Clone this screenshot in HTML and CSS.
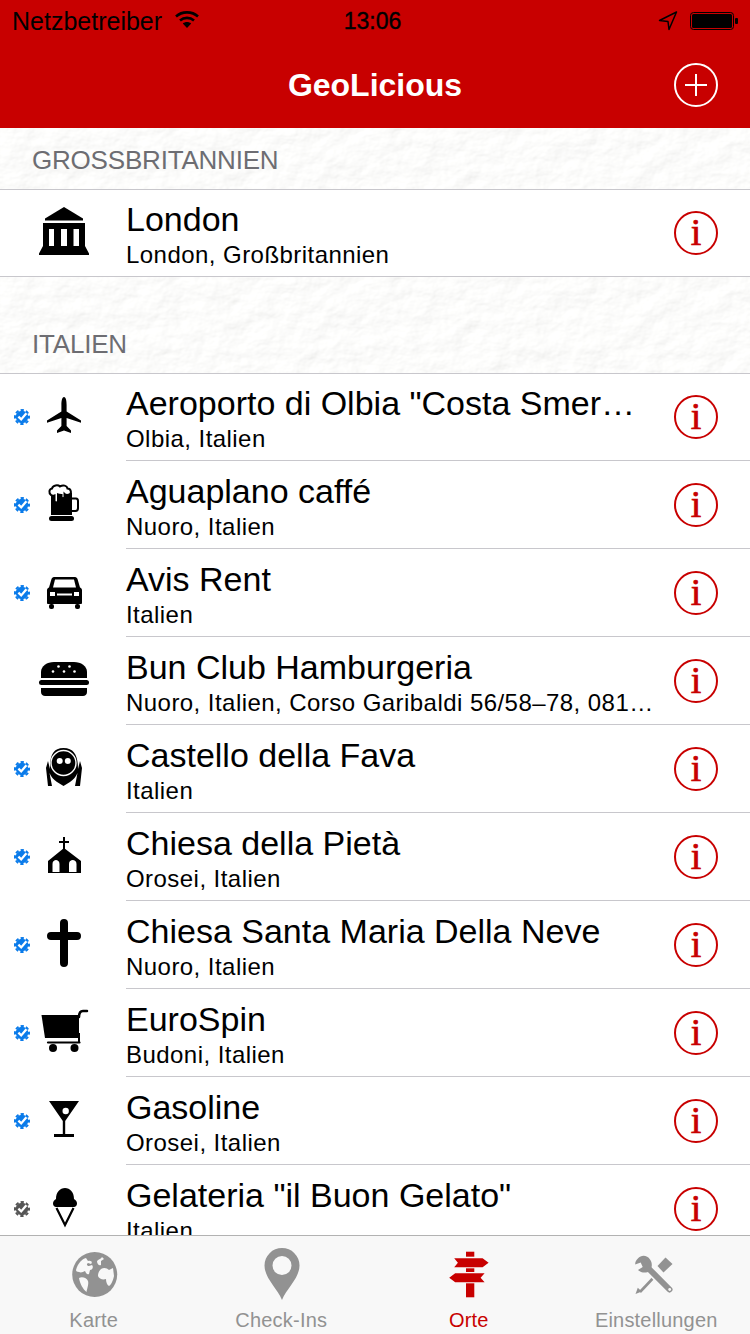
FILE: index.html
```html
<!DOCTYPE html>
<html lang="de">
<head>
    <meta charset="UTF-8">
    <meta name="viewport" content="width=device-width, initial-scale=1.0">
    <title>GeoLicious</title>
    <link rel="stylesheet" href="styles.css">
</head>
<body>
    <svg class="defs" width="0" height="0">
        <defs>
            <filter id="leather" x="0" y="0" width="100%" height="100%">
                <feTurbulence type="fractalNoise" baseFrequency="0.035 0.05" numOctaves="4" seed="11" result="n"/>
                <feDiffuseLighting in="n" lighting-color="#ffffff" surfaceScale="2.400" diffuseConstant="1.05">
                    <feDistantLight azimuth="45" elevation="62"/>
                </feDiffuseLighting>
                <feComponentTransfer>
                    <feFuncR type="linear" slope="0.45" intercept="0.56"/>
                    <feFuncG type="linear" slope="0.45" intercept="0.56"/>
                    <feFuncB type="linear" slope="0.45" intercept="0.55"/>
                </feComponentTransfer>
            </filter>
            <symbol id="badge" viewBox="0 0 16 16">
                <circle cx="8" cy="8" r="6.2" fill="currentColor"/>
                <circle cx="8" cy="8" r="7" fill="none" stroke="currentColor" stroke-width="2" stroke-dasharray="3.3 2.2" stroke-dashoffset="1.650"/>
                <path d="M4.400 7.600L7.200 10.400L12.400 4.200" fill="none" stroke="#fff" stroke-width="2.300"/>
            </symbol>
        </defs>
    </svg>

    <header class="top">
        <div class="status">
            <div class="status-left">
                <span>Netzbetreiber</span>
                <svg class="wifi" width="26" height="18" viewBox="0 0 26 18">
                    <path d="M2 6.500C8 1 18 1 24 6.500" fill="none" stroke="#000" stroke-width="2.600"/>
                    <path d="M6 10.500C10 7 16 7 20 10.500" fill="none" stroke="#000" stroke-width="2.600"/>
                    <path d="M13 18L8.800 13.600C11 11.600 15 11.600 17.200 13.600Z"/>
                </svg>
            </div>
            <div class="status-time">13:06</div>
            <div class="status-right">
                <svg width="20" height="20" viewBox="0 0 20 20">
                    <path d="M18.500 1L1.500 9.500L10 10.500L11 18.500Z" fill="none" stroke="#000" stroke-width="1.500" stroke-linejoin="round"/>
                </svg>
                <svg width="48" height="18" viewBox="0 0 48 18">
                    <rect x="0.500" y="0.500" width="43" height="17" rx="3" fill="none" stroke="#000"/>
                    <rect x="2" y="2" width="40" height="14" rx="1.500"/>
                    <rect x="45" y="6" width="3" height="6" rx="1"/>
                </svg>
            </div>
        </div>
        <div class="nav">
            <span></span>
            <div class="nav-title">GeoLicious</div>
            <svg class="nav-add" width="44" height="44" viewBox="0 0 44 44">
                <circle cx="22" cy="22" r="21" fill="none" stroke="#fff" stroke-width="2"/>
                <path d="M22 11V33M11 22H33" stroke="#fff" stroke-width="2"/>
            </svg>
        </div>
    </header>

    <main class="list">
        <section class="group group-single">
            <div class="band band-first">
                <svg class="texture"><rect width="100%" height="100%" filter="url(#leather)"/></svg>
                <h2>GROSSBRITANNIEN</h2>
            </div>
            <div class="row">
                <span class="mark"></span>
                <svg class="place" viewBox="0 0 68 60">
                    <path d="M34 4L53 15.500V17.500H15V15.500Z"/>
                    <path fill-rule="evenodd" d="M13 20H55V43L59 50.500V52H9V50.500L13 43ZM19 26V43H24V26ZM31 26V43H37V26ZM43.500 26V43H49V26Z"/>
                </svg>
                <div class="row-body">
                    <div class="row-text">
                        <div class="name">London</div>
                        <div class="sub">London, Großbritannien</div>
                    </div>
                    <div class="info">i</div>
                </div>
            </div>
        </section>

        <section class="group">
            <div class="band band-tall">
                <svg class="texture"><rect width="100%" height="100%" filter="url(#leather)"/></svg>
                <h2>ITALIEN</h2>
            </div>

            <div class="row">
                <svg class="mark"><use href="#badge"/></svg>
                <svg class="place" viewBox="0 0 68 60">
                    <path d="M34 10C36 10 36.600 14 36.600 18V24.500L51 33.500V35.800L36.600 31V39L41 43.600V46L34 43.600L27 46V43.600L31.400 39V31L17 35.800V33.500L31.400 24.500V18C31.400 14 32 10 34 10Z"/>
                </svg>
                <div class="row-body">
                    <div class="row-text">
                        <div class="name">Aeroporto di Olbia "Costa Smer…</div>
                        <div class="sub">Olbia, Italien</div>
                    </div>
                    <div class="info">i</div>
                </div>
            </div>

            <div class="row">
                <svg class="mark"><use href="#badge"/></svg>
                <svg class="place" viewBox="0 0 68 60">
                    <path d="M21 18H42V40H21Z"/>
                    <path d="M42 23.500H46C47.500 23.500 48 24.500 48 26V33C48 35 47 36 45.500 36H42" fill="none" stroke="#000" stroke-width="2"/>
                    <rect x="19" y="41" width="25" height="5" rx="2.500"/>
                    <path d="M21 20C18.500 18 19 14 22 13.500C23 10 28 9.500 30 11.500C33 9.500 37 10.500 37.500 13.500C41 13.500 42 18 39.500 19.500C37 20.500 35 19.500 34.500 19V22C34 23.500 32 23.500 31.500 22V20C29.500 20 29 20 28 19.500V26C27.500 28 25 28 24.500 26V20.500C23 21 22 21 21 20Z" fill="#fff" stroke="#000" stroke-width="2"/>
                </svg>
                <div class="row-body">
                    <div class="row-text">
                        <div class="name">Aguaplano caffé</div>
                        <div class="sub">Nuoro, Italien</div>
                    </div>
                    <div class="info">i</div>
                </div>
            </div>

            <div class="row">
                <svg class="mark"><use href="#badge"/></svg>
                <svg class="place" viewBox="0 0 68 60">
                    <path fill-rule="evenodd" d="M24 14H45C46.500 14 47 15 47.500 16L50 24.500C51.500 25 52 26 52 27.500V40C52 40.500 51.500 41 51 41H18C17.500 41 17 40.500 17 40V27.500C17 26 17.500 25 19 24.500L21.500 16C22 15 22.500 14 24 14ZM25 16.500L23 24.500H46L44 16.500ZM20 29V33H25V29ZM44 29V33H49V29ZM27 30.500V32.500H42V30.500Z"/>
                    <rect x="19" y="41" width="5" height="5" rx="2"/>
                    <rect x="45" y="41" width="5" height="5" rx="2"/>
                </svg>
                <div class="row-body">
                    <div class="row-text">
                        <div class="name">Avis Rent</div>
                        <div class="sub">Italien</div>
                    </div>
                    <div class="info">i</div>
                </div>
            </div>

            <div class="row">
                <span class="mark"></span>
                <svg class="place" viewBox="0 0 68 60">
                    <path d="M11 27V21C11 15 17 11 24 11H44C51 11 57 15 57 21V27Z"/>
                    <rect x="9" y="29" width="50" height="5" rx="2.500"/>
                    <path d="M11 37H57V41C57 43.500 55 45 53 45H15C13 45 11 43.500 11 41Z"/>
                    <g fill="#fff">
                        <circle cx="28.500" cy="15.500" r="1.300"/>
                        <circle cx="39.500" cy="15.500" r="1.300"/>
                        <circle cx="23" cy="20.500" r="1.300"/>
                        <circle cx="34" cy="20.500" r="1.300"/>
                        <circle cx="44.500" cy="20.500" r="1.300"/>
                    </g>
                </svg>
                <div class="row-body">
                    <div class="row-text">
                        <div class="name">Bun Club Hamburgeria</div>
                        <div class="sub">Nuoro, Italien, Corso Garibaldi 56/58–78, 081…</div>
                    </div>
                    <div class="info">i</div>
                </div>
            </div>

            <div class="row">
                <svg class="mark"><use href="#badge"/></svg>
                <svg class="place" viewBox="0 0 68 60">
                    <path d="M18 22L16 29L18 47H22L19.500 34C21 38 24 41 27 43L33.500 47L40 43C43 41 46 38 47.500 34L45 47H50L52 29L50 22L48 30C48 18 45 9 33.500 9C22 9 20 18 20 30Z"/>
                    <circle cx="33.500" cy="24" r="12.500" fill="none" stroke="#fff" stroke-width="1.400"/>
                    <circle cx="29.700" cy="22" r="3" fill="#fff"/>
                    <circle cx="37.800" cy="22" r="3" fill="#fff"/>
                </svg>
                <div class="row-body">
                    <div class="row-text">
                        <div class="name">Castello della Fava</div>
                        <div class="sub">Italien</div>
                    </div>
                    <div class="info">i</div>
                </div>
            </div>

            <div class="row">
                <svg class="mark"><use href="#badge"/></svg>
                <svg class="place" viewBox="0 0 68 60">
                    <path d="M33 10H35V14H39V16H35V22H33V16H29V14H33Z"/>
                    <path fill-rule="evenodd" d="M34 21L51 34V46H18V34ZM22.500 45H29.500V37C29.500 34 27.500 33 26 33C24.500 33 22.500 34 22.500 37ZM39 45H46.500V37C46.500 34 44.500 33 42.700 33C41 33 39 34 39 37Z"/>
                </svg>
                <div class="row-body">
                    <div class="row-text">
                        <div class="name">Chiesa della Pietà</div>
                        <div class="sub">Orosei, Italien</div>
                    </div>
                    <div class="info">i</div>
                </div>
            </div>

            <div class="row">
                <svg class="mark"><use href="#badge"/></svg>
                <svg class="place" viewBox="0 0 68 60">
                    <path d="M34 8V48M21 21H47" fill="none" stroke="#000" stroke-width="8" stroke-linecap="round"/>
                </svg>
                <div class="row-body">
                    <div class="row-text">
                        <div class="name">Chiesa Santa Maria Della Neve</div>
                        <div class="sub">Nuoro, Italien</div>
                    </div>
                    <div class="info">i</div>
                </div>
            </div>

            <div class="row">
                <svg class="mark"><use href="#badge"/></svg>
                <svg class="place" viewBox="0 0 68 60">
                    <path d="M11.500 12H49V35H15Z"/>
                    <path d="M49 14C49 10 50 8 53 8H57" fill="none" stroke="#000" stroke-width="2.500" stroke-linecap="round"/>
                    <path d="M18 39.500H49.500" stroke="#000" stroke-width="2.200" stroke-linecap="round"/>
                    <path d="M49 30V39" stroke="#000" stroke-width="2"/>
                    <circle cx="23" cy="45" r="4"/>
                    <circle cx="44.500" cy="45" r="4"/>
                </svg>
                <div class="row-body">
                    <div class="row-text">
                        <div class="name">EuroSpin</div>
                        <div class="sub">Budoni, Italien</div>
                    </div>
                    <div class="info">i</div>
                </div>
            </div>

            <div class="row">
                <svg class="mark"><use href="#badge"/></svg>
                <svg class="place" viewBox="0 0 68 60">
                    <path d="M19 10H49L35.200 30V43H44V46H24V43H32.800V30Z"/>
                    <circle cx="35.700" cy="20" r="3.200" fill="#fff"/>
                </svg>
                <div class="row-body">
                    <div class="row-text">
                        <div class="name">Gasoline</div>
                        <div class="sub">Orosei, Italien</div>
                    </div>
                    <div class="info">i</div>
                </div>
            </div>

            <div class="row">
                <svg class="mark mark-grey"><use href="#badge"/></svg>
                <svg class="place" viewBox="0 0 68 60">
                    <path d="M26 20C26 13 30 9 35 9C40 9 44 13 44 20C46 21 47 23 47 24.500C47 26.500 45.500 28 44 28H26C24.500 28 23 26.500 23 24.500C23 23 24 21 26 20Z"/>
                    <path d="M26.500 29L35 46L43.500 29" fill="none" stroke="#000" stroke-width="2.200"/>
                </svg>
                <div class="row-body">
                    <div class="row-text">
                        <div class="name">Gelateria "il Buon Gelato"</div>
                        <div class="sub">Italien</div>
                    </div>
                    <div class="info">i</div>
                </div>
            </div>
        </section>
    </main>

    <nav class="tabs">
        <div class="tab">
            <svg class="tab-icon" viewBox="0 0 52 52">
                <circle cx="26.700" cy="26.500" r="22.500"/>
                <g fill="#f8f8f8">
                    <path d="M8 22C10 15 14 11 18 10L20 13C23 12 25 14 23 16L20 15C18 16 19 18 21 18L24 17C26 19 24 22 22 22L21 26C19 27 18 25 17 23C15 24 13 25 11 24C9 24 8 23 8 22Z"/>
                    <path d="M29 13C31 11 33 11 34 9L36 11L33 13L33 17C31 18 29 16 29 13Z"/>
                    <path d="M33 21C36 19 39 20 41 22L45 20L46 28C45 33 43 37 41 38C39 37 38 34 38 31C35 32 31 31 30 28C30 25 31 23 33 21Z"/>
                    <path d="M11 30C14 28 19 30 20 33C21 36 19 41 18.500 44C15 41 12 36 11 30Z"/>
                </g>
            </svg>
            <span class="tab-label">Karte</span>
        </div>
        <div class="tab">
            <svg class="tab-icon" viewBox="0 0 52 52">
                <path fill-rule="evenodd" d="M27 52C22 40 9.500 30 9.500 17.500A17.500 17.500 0 0 1 44.500 17.500C44.500 30 32 40 27 52ZM27 8A9.500 9.500 0 0 0 27 27A9.500 9.500 0 0 0 27 8Z"/>
            </svg>
            <span class="tab-label">Check-Ins</span>
        </div>
        <div class="tab tab-active">
            <svg class="tab-icon" viewBox="0 0 52 52">
                <path d="M23 3.700H31.300V8.700H23Z"/>
                <path d="M11.200 10.300H39.600L45.600 14.700L39.600 19.300H11.200L14.900 14.700Z"/>
                <path d="M23 20.300H31.300V24H23Z"/>
                <path d="M12.200 25.300H41.600L37.600 29.700L41.600 34.300H12.200L6.200 29.700Z"/>
                <path d="M23 35.300H31.300V49.300H23Z"/>
            </svg>
            <span class="tab-label">Orte</span>
        </div>
        <div class="tab">
            <svg class="tab-icon" viewBox="0 0 52 52">
                <path d="M27 26L10 44" stroke="#929292" stroke-width="2.600"/>
                <path d="M5.500 46L7.800 39.800L11.800 43.500Z"/>
                <path d="M27.500 18L35.500 9.500L42.500 16L33.500 24.500Z"/>
                <path d="M18 20L39.500 41.500" stroke="#f8f8f8" stroke-width="9"/>
                <path d="M18 20L39.500 41.500" stroke="#929292" stroke-width="6" stroke-linecap="round"/>
                <path d="M13.500 7.800C9.500 8 5 12 5.200 16.500L10.700 14.500L12.700 19L8 22C11 25 16.500 25.500 19.500 23C22.500 20 22.500 14.500 20 11.500C18.500 9 16 7.800 13.500 7.800Z"/>
                <circle cx="39.700" cy="41.500" r="1.400" fill="#f8f8f8"/>
            </svg>
            <span class="tab-label">Einstellungen</span>
        </div>
    </nav>
</body>
</html>
```

FILE: styles.css
```css
* {
    box-sizing: border-box;
}
html, body {
    margin: 0;
    padding: 0;
}
body {
    width: 750px;
    height: 1334px;
    overflow: hidden;
    display: flex;
    flex-direction: column;
    font-family: "Liberation Sans", Arial, sans-serif;
    background-color: #fff;
    color: #000;
}
.defs {
    position: absolute;
}

/* red top area */
.top {
    height: 128px;
    flex: none;
    background-color: #c80000;
}
.status {
    height: 42px;
    padding: 0 12px;
    display: grid;
    grid-template-columns: 1fr auto 1fr;
    align-items: center;
    font-size: 25px;
}
.status-left {
    display: flex;
    align-items: center;
    gap: 12px;
}
.wifi {
    margin-bottom: 4px;
}
.status-time {
    margin-right: 5px;
    font-size: 23px;
    -webkit-text-stroke: 0.4px #000;
}
.status-right {
    display: flex;
    justify-content: flex-end;
    align-items: center;
    gap: 12px;
}
.nav {
    height: 86px;
    padding: 0 32px;
    display: grid;
    grid-template-columns: 1fr auto 1fr;
    align-items: center;
}
.nav-title {
    font-size: 32px;
    font-weight: bold;
    color: #fff;
}
.nav-add {
    justify-self: end;
}

/* list */
.list {
    flex: 1;
    min-height: 0;
    overflow: hidden;
}
.band {
    position: relative;
    display: flex;
    align-items: flex-end;
    padding: 0 32px 14px;
    border-bottom: 1px solid #c8c7cc;
    background-color: #f0f0ee;
    overflow: hidden;
}
.band-first {
    height: 62px;
}
.band-tall {
    height: 97px;
    margin-bottom: -1px;
}
.texture {
    position: absolute;
    top: 0;
    left: 0;
    width: 100%;
    height: 100%;
}
.band h2 {
    position: relative;
    margin: 0;
    font-size: 26px;
    line-height: 30px;
    letter-spacing: -0.2px;
    font-weight: normal;
    color: #6d6d72;
}
.row {
    display: flex;
    align-items: center;
    height: 88px;
    background-color: #fff;
}
.mark {
    flex: none;
    width: 16px;
    height: 16px;
    margin-left: 14px;
    color: #0a7bea;
}
.mark-grey {
    color: #555;
}
.place {
    flex: none;
    width: 68px;
    height: 60px;
}
.row-body {
    flex: 1;
    min-width: 0;
    height: 100%;
    margin-left: 28px;
    padding-top: 1px;
    padding-right: 32px;
    display: flex;
    align-items: center;
    border-bottom: 1px solid #c8c7cc;
}
.group-single .row {
    height: 87px;
    border-bottom: 1px solid #c8c7cc;
}
.group-single .row-body {
    padding-top: 0;
    border-bottom: 0;
}
.row-text {
    flex: 1;
    min-width: 0;
    padding-top: 10px;
    align-self: flex-start;
}
.name {
    font-size: 34px;
    line-height: 38px;
    white-space: nowrap;
}
.sub {
    font-size: 24px;
    line-height: 34px;
    letter-spacing: 0.45px;
    white-space: nowrap;
}
.info {
    flex: none;
    width: 44px;
    height: 44px;
    margin-left: 20px;
    border: 2px solid #c80000;
    border-radius: 50%;
    text-align: center;
    font-family: "Liberation Serif", "Times New Roman", serif;
    font-size: 38px;
    line-height: 39px;
    color: #c80000;
    -webkit-text-stroke: 0.7px #c80000;
}

/* bottom tabs */
.tabs {
    height: 99px;
    flex: none;
    display: grid;
    grid-template-columns: repeat(4, 1fr);
    border-top: 1px solid #b2b2b2;
    background-color: #f8f8f8;
}
.tab {
    display: flex;
    flex-direction: column;
    align-items: center;
    padding-top: 12px;
    color: #929292;
}
.tab-active {
    color: #c80000;
}
.tab-icon {
    width: 52px;
    height: 52px;
    fill: currentColor;
}
.tab-label {
    margin-top: 8px;
    font-size: 20px;
    line-height: 24px;
    letter-spacing: 0.2px;
}
```
